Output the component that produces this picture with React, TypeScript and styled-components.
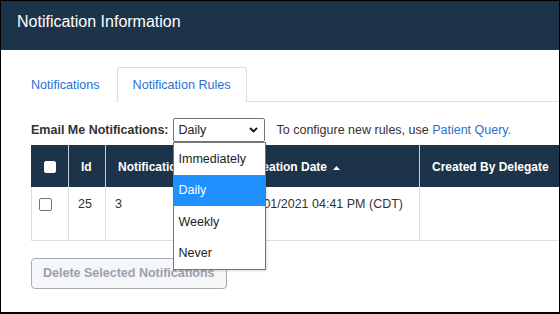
import React from "react";
import styled, { createGlobalStyle } from "styled-components";

const GlobalStyle = createGlobalStyle`
  html, body { margin: 0; padding: 0; background: #fff; }
  body { font-family: "Liberation Sans", Arial, sans-serif; color: #333; }
  * { box-sizing: border-box; }
`;

const NAVY = "#1d3349";
const BLUE = "#2a6fd3";

const Frame = styled.div`
  width: 560px;
  height: 314px;
  border: 1px solid #000;
  border-bottom-width: 2px;
  overflow: hidden;
  background: #fff;
  display: flex;
  flex-direction: column;
`;

const Header = styled.header`
  height: 49px;
  flex: none;
  background: ${NAVY};
  color: #fff;
  padding: 11px 0 0 16px;
  font-size: 16px;
  line-height: 20px;
`;

const Body = styled.div`
  flex: 1;
  padding: 17px 0 0 14px;
  overflow: hidden;
`;

const TabStrip = styled.nav`
  display: flex;
  gap: 1px;
  border-bottom: 1px solid #dedede;
  height: 35px;
`;

const Tab = styled.div<{ $active?: boolean }>`
  height: 35px;
  padding: 0 15px;
  display: flex;
  align-items: center;
  font-size: 12.6px;
  color: ${BLUE};
  border: 1px solid ${(p) => (p.$active ? "#dedede" : "transparent")};
  border-bottom: none;
  border-radius: 3px 3px 0 0;
  background: #fff;
  margin-bottom: ${(p) => (p.$active ? "-1px" : "0")};
  position: relative;
`;

const Pane = styled.section`
  padding: 16px 0 0 16px;
`;

const ControlRow = styled.div`
  display: flex;
  align-items: center;
  height: 24px;
  font-size: 12.5px;
`;

const Label = styled.span`
  font-weight: bold;
  color: #333;
  margin-right: 4px;
`;

const SelectWrap = styled.div`
  position: relative;
  z-index: 5;
`;

const SelectBox = styled.div`
  width: 92px;
  height: 24px;
  border: 1px solid #767676;
  border-radius: 2px;
  display: flex;
  align-items: center;
  justify-content: space-between;
  padding: 0 6px 0 5px;
  color: #222;
  background: #fff;
`;

const OptionList = styled.ul`
  position: absolute;
  top: 24px;
  left: 0;
  width: 93px;
  margin: 0;
  padding: 0;
  list-style: none;
  background: #fff;
  border: 1px solid #767676;
  box-shadow: 1px 1px 2px rgba(0, 0, 0, 0.15);
`;

const Option = styled.li<{ $selected?: boolean }>`
  height: 31.5px;
  display: flex;
  align-items: center;
  padding-left: 5px;
  font-size: 12.5px;
  color: ${(p) => (p.$selected ? "#fff" : "#222")};
  background: ${(p) => (p.$selected ? "#1e90ff" : "#fff")};
`;

const Hint = styled.span`
  margin-left: 12px;
  color: #333;
`;

const Link = styled.a`
  color: ${BLUE};
  text-decoration: none;
`;

const TableWrap = styled.div`
  margin-top: 3px;
  width: 620px;
`;

const Table = styled.table`
  border-collapse: collapse;
  table-layout: fixed;
  width: 620px;
  font-size: 12.5px;
`;

const Th = styled.th<{ $w: number; $center?: boolean }>`
  width: ${(p) => p.$w}px;
  height: 42px;
  background: ${NAVY};
  color: #fff;
  font-size: 12px;
  font-weight: bold;
  text-align: ${(p) => (p.$center ? "center" : "left")};
  padding: 2px 12px 0;
  border-left: 1px solid #c9ced4;
  white-space: nowrap;
  overflow: hidden;
  &:first-child { border-left-color: ${NAVY}; padding: 0; }
`;

const Td = styled.td`
  height: 53px;
  vertical-align: top;
  padding: 9px 9px 0 9px;
  line-height: 17px;
  color: #333;
  border: 1px solid #dedede;
  border-top: none;
  white-space: nowrap;
  overflow: hidden;
  &:first-child { padding: 9px 0 0 7px; }
`;

const Check = styled.span<{ $header?: boolean }>`
  display: inline-block;
  vertical-align: middle;
  width: ${(p) => (p.$header ? 12 : 13)}px;
  height: ${(p) => (p.$header ? 12 : 13)}px;
  background: #fff;
  border: 1px solid ${(p) => (p.$header ? "#fff" : "#767676")};
  border-radius: 2px;
`;

const SortArrow = styled.svg`
  margin-left: 6px;
  vertical-align: middle;
`;

const DeleteButton = styled.button`
  margin-top: 17px;
  height: 31px;
  padding: 0 11px;
  font-family: inherit;
  font-size: 12.5px;
  font-weight: bold;
  color: #9aa1aa;
  background: #f5f6f8;
  border: 1.5px solid #a3abb6;
  border-radius: 4px;
`;

export default function App() {
  return (
    <>
      <GlobalStyle />
      <Frame>
        <Header>Notification Information</Header>
        <Body>
          <TabStrip>
            <Tab>Notifications</Tab>
            <Tab $active>Notification Rules</Tab>
          </TabStrip>
          <Pane>
            <ControlRow>
              <Label>Email Me Notifications:</Label>
              <SelectWrap>
                <SelectBox>
                  <span>Daily</span>
                  <svg width="9" height="6" viewBox="0 0 9 6">
                    <path d="M1 1 L4.5 4.5 L8 1" fill="none" stroke="#111" strokeWidth="1.8" />
                  </svg>
                </SelectBox>
                <OptionList>
                  <Option>Immediately</Option>
                  <Option $selected>Daily</Option>
                  <Option>Weekly</Option>
                  <Option>Never</Option>
                </OptionList>
              </SelectWrap>
              <Hint>
                To configure new rules, use <Link href="#">Patient Query.</Link>
              </Hint>
            </ControlRow>
            <TableWrap>
              <Table>
                <thead>
                  <tr>
                    <Th $w={37} $center>
                      <Check $header />
                    </Th>
                    <Th $w={37}>Id</Th>
                    <Th $w={131}>Notification Type</Th>
                    <Th $w={183}>
                      Creation Date
                      <SortArrow width="7" height="4" viewBox="0 0 7 4">
                        <path d="M0 4 L3.5 0 L7 4 Z" fill="#fff" />
                      </SortArrow>
                    </Th>
                    <Th $w={232}>Created By Delegate</Th>
                  </tr>
                </thead>
                <tbody>
                  <tr>
                    <Td>
                      <Check />
                    </Td>
                    <Td>25</Td>
                    <Td>3</Td>
                    <Td>05/01/2021 04:41 PM (CDT)</Td>
                    <Td></Td>
                  </tr>
                </tbody>
              </Table>
            </TableWrap>
            <DeleteButton disabled>Delete Selected Notifications</DeleteButton>
          </Pane>
        </Body>
      </Frame>
    </>
  );
}
